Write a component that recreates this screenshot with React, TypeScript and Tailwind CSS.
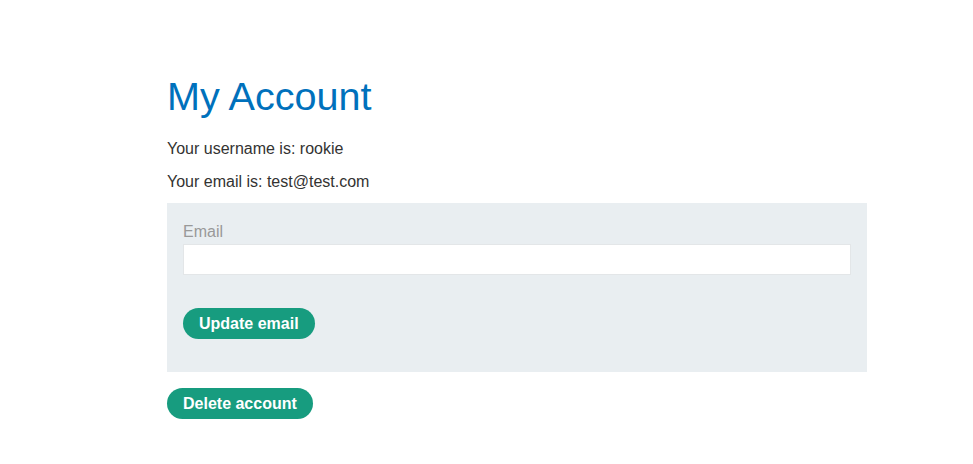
export default function App() {
  return (
    <div className="min-h-[464px] bg-white font-['Liberation_Sans',Arial,sans-serif] text-[#333332]">
      <div className="ml-[167px] w-[700px] pt-[76px]">
        <h1 className="text-[39.6px] leading-[40px] text-[#0071bc]">My Account</h1>
        <p className="mt-[20.5px] text-[16px] leading-[24px]">Your username is: rookie</p>
        <p className="mt-[9px] text-[16px] leading-[24px]">Your email is: test@test.com</p>
        <form className="mt-[9.5px] flex flex-col bg-[#e9eef1] px-4 pt-[17px] pb-4">
          <label className="text-[16px] leading-[24px] text-[#999999]">Email</label>
          <input className="h-[31px] w-full border border-[#e3e6e8] bg-white px-2 text-[16px] outline-none" />
          <div className="mt-[33px] mb-[17px]">
            <button type="button" className="h-[31px] rounded-[16px] bg-[#179c7f] px-4 text-[16px] font-bold text-white">Update email</button>
          </div>
        </form>
        <div className="mt-4">
          <button type="button" className="h-[31px] rounded-[16px] bg-[#179c7f] px-4 text-[16px] font-bold text-white">Delete account</button>
        </div>
      </div>
    </div>
  );
}
